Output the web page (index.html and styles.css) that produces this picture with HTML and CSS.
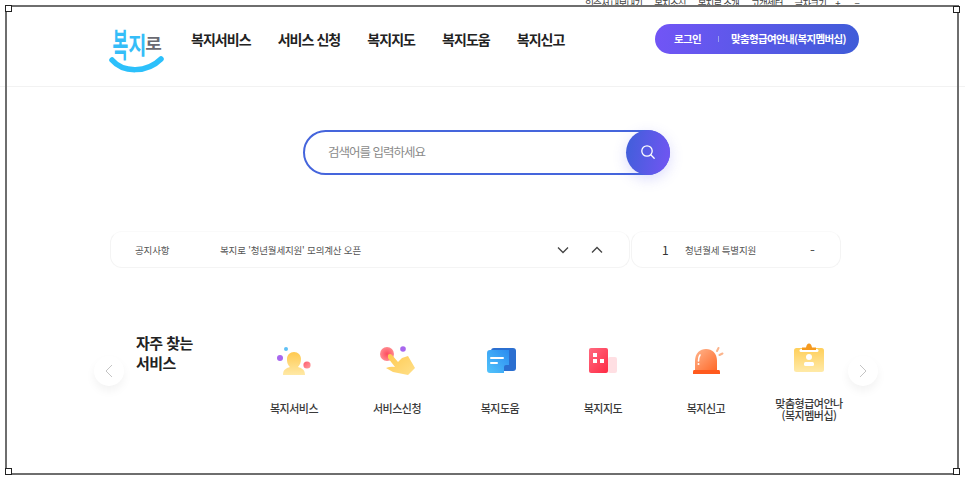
FILE: index.html
```html
<!DOCTYPE html>
<html lang="ko">
<head>
<meta charset="utf-8">
<title>복지로</title>
<link rel="stylesheet" href="styles.css">
</head>
<body>
<div class="page">
  <div class="util">
    <span>인증서 내보내기</span><span>복지소식</span><span>복지로 소개</span><span>고객센터</span><span>글자크기</span><span class="sym">+</span><span class="sym">−</span>
  </div>
  <header class="header">
    <a class="logo">
      <span class="logo-text"><span class="l1">복</span><span class="l2">지</span><span class="l3">로</span></span>
      <svg class="smile" width="58" height="20" viewBox="0 0 58 20"><path d="M3 4 C14 17 38 17 52 3" fill="none" stroke="#2cc0fb" stroke-width="5.5" stroke-linecap="round"/></svg>
    </a>
    <nav class="nav"><a>복지서비스</a><a>서비스 신청</a><a>복지지도</a><a>복지도움</a><a>복지신고</a></nav>
    <div class="pill"><a class="pill-login">로그인</a><i class="pill-sep"></i><a>맞춤형급여안내(복지멤버십)</a></div>
  </header>

  <section class="search">
    <div class="search-box">
      <span class="placeholder">검색어를 입력하세요</span>
      <button class="search-btn" aria-label="검색">
        <svg width="16" height="16" viewBox="0 0 16 16"><circle cx="7" cy="7" r="5.2" fill="none" stroke="#fff" stroke-width="1.3"/><path d="M11 11l3.2 3.2" stroke="#fff" stroke-width="1.3" stroke-linecap="round"/></svg>
      </button>
    </div>
  </section>

  <section class="info">
    <div class="card notice">
      <span class="notice-label">공지사항</span>
      <span class="notice-text">복지로 '청년월세지원' 모의계산 오픈</span>
      <svg class="chev" width="12" height="8" viewBox="0 0 12 8"><path d="M1 1.5l5 5 5-5" fill="none" stroke="#444" stroke-width="1.3"/></svg>
      <svg class="chev chev-up" width="12" height="8" viewBox="0 0 12 8"><path d="M1 6.5l5-5 5 5" fill="none" stroke="#444" stroke-width="1.3"/></svg>
    </div>
    <div class="card rank">
      <span class="rank-num">1</span>
      <span class="rank-text">청년월세 특별지원</span>
      <span class="rank-delta">-</span>
    </div>
  </section>

  <section class="services">
    <h2 class="services-title">자주 찾는<br>서비스</h2>
    <ul class="service-list">
      <li class="service">
        <svg width="40" height="40" viewBox="0 0 40 40">
          <defs>
            <linearGradient id="g1" x1="0" y1="0" x2="0" y2="1"><stop offset="0" stop-color="#ffc94f"/><stop offset="1" stop-color="#ffe9a6"/></linearGradient>
            <linearGradient id="r1" x1="0" y1="0" x2="1" y2="1"><stop offset="0" stop-color="#ff5a6e"/><stop offset="1" stop-color="#ffa0a0"/></linearGradient>
          </defs>
          <circle cx="12" cy="7" r="2" fill="#5fc0f5"/>
          <circle cx="6" cy="16" r="3" fill="#a867ee"/>
          <circle cx="33" cy="23" r="3.6" fill="url(#r1)"/>
          <path d="M9 33 C9 27 13 26 16 25 C13 22 13 19 13 17 C13 13 16 10 20 10 C24 10 27 13 27 17 C27 20 26 23 24 25 C27 26 31 27 31 33 Z" fill="url(#g1)"/>
        </svg>
        <span>복지서비스</span>
      </li>
      <li class="service">
        <svg width="40" height="40" viewBox="0 0 40 40">
          <defs>
            <radialGradient id="r2"><stop offset="0" stop-color="#ff4c5e"/><stop offset="1" stop-color="#ff8a8f"/></radialGradient>
            <linearGradient id="g2" x1="0" y1="0" x2="1" y2="1"><stop offset="0" stop-color="#ffc94f"/><stop offset="1" stop-color="#ffe08a"/></linearGradient>
          </defs>
          <circle cx="10" cy="12" r="7" fill="url(#r2)"/>
          <circle cx="26" cy="7" r="2.8" fill="#a867ee"/>
          <path d="M11 13 Q13 11 15 13 L21 20 L25 16 L31 14 L38 26 L31 33 L16 30 L9 26 Q14 24 18 25 L11 16 Z" fill="url(#g2)"/>
        </svg>
        <span>서비스신청</span>
      </li>
      <li class="service">
        <svg width="40" height="40" viewBox="0 0 40 40">
          <defs><linearGradient id="b3" x1="0" y1="1" x2="1" y2="0"><stop offset="0" stop-color="#52c4fb"/><stop offset="1" stop-color="#2b8cf0"/></linearGradient></defs>
          <path d="M11 9 Q11 6 14 6 H33 Q36 6 36 9 V26 Q36 29 33 29 H22 Z" fill="#2b6fd0"/>
          <path d="M7 11 Q7 8 10 8 H29 V23 H26 Q24 23 24 25 V31 H10 Q7 31 7 28 Z" fill="url(#b3)"/>
          <path d="M11 16 H23" stroke="#fff" stroke-width="2" stroke-linecap="round"/>
          <path d="M11 21 H17" stroke="#fff" stroke-width="2" stroke-linecap="round"/>
        </svg>
        <span>복지도움</span>
      </li>
      <li class="service">
        <svg width="40" height="40" viewBox="0 0 40 40">
          <defs>
            <linearGradient id="r4" x1="0" y1="0" x2="1" y2="1"><stop offset="0" stop-color="#ff6a80"/><stop offset="1" stop-color="#ff2a44"/></linearGradient>
          </defs>
          <rect x="25" y="15" width="9" height="16" rx="2" fill="#ffdfe3"/>
          <rect x="6" y="6" width="19" height="25" rx="2" fill="url(#r4)"/>
          <rect x="10" y="11" width="4" height="4" fill="#fff"/>
          <rect x="10" y="17" width="4" height="4" fill="#fff"/>
          <rect x="17" y="17" width="4" height="4" fill="#fff"/>
        </svg>
        <span>복지지도</span>
      </li>
      <li class="service">
        <svg width="40" height="40" viewBox="0 0 40 40">
          <defs><linearGradient id="o5" x1="0" y1="0" x2="1" y2="1"><stop offset="0" stop-color="#ffb48c"/><stop offset="1" stop-color="#ff6a2a"/></linearGradient></defs>
          <path d="M9 28 V19 C9 11 14 7 20 7 C26 7 31 11 31 19 V28 Z" fill="url(#o5)"/>
          <path d="M8 28 H33 Q34 28 34 30 V32 H7 V30 Q7 28 8 28 Z" fill="#ff5a1e"/>
          <path d="M14 13 Q12.500 15 12.500 19" fill="none" stroke="#fff" stroke-width="1.600" stroke-linecap="round"/>
          <circle cx="12.500" cy="22" r="1" fill="#fff"/>
          <path d="M31 9 L32.500 6" stroke="#fbb48c" stroke-width="2" stroke-linecap="round"/>
          <path d="M33.500 13 L36.500 11.500" stroke="#fbb48c" stroke-width="2" stroke-linecap="round"/>
        </svg>
        <span>복지신고</span>
      </li>
      <li class="service">
        <svg width="40" height="40" viewBox="0 0 40 40">
          <defs><linearGradient id="y6" x1="0" y1="0" x2="0" y2="1"><stop offset="0" stop-color="#ffcf5a"/><stop offset="1" stop-color="#ffeaa8"/></linearGradient></defs>
          <rect x="5" y="6" width="30" height="24" rx="2.500" fill="url(#y6)"/>
          <path d="M12 8.500 H28" stroke="#fff" stroke-width="3" stroke-linecap="round"/>
          <path d="M13 8 V5.500 H17 C17.500 3 18.500 1.500 20 1.500 C21.500 1.500 22.500 3 23 5.500 H27 V8 Z" fill="#f59a1f"/>
          <circle cx="20" cy="15" r="3" fill="#fff"/>
          <rect x="15" y="20" width="10" height="4" rx="1.500" fill="#fff"/>
        </svg>
        <span class="two-line">맞춤형급여안나<br>(복지멤버십)</span>
      </li>
    </ul>
    <button class="arrow arrow-left" aria-label="이전"><svg width="8" height="14" viewBox="0 0 8 14"><path d="M7 1L1 7l6 6" fill="none" stroke="#c4c4c4" stroke-width="1"/></svg></button>
    <button class="arrow arrow-right" aria-label="다음"><svg width="8" height="14" viewBox="0 0 8 14"><path d="M1 1l6 6-6 6" fill="none" stroke="#c4c4c4" stroke-width="1"/></svg></button>
  </section>

  <div class="frame">
    <i class="handle h-tl"></i><i class="handle h-tr"></i><i class="handle h-bl"></i><i class="handle h-br"></i>
  </div>
</div>
</body>
</html>
```
FILE: styles.css
```css
* { box-sizing: border-box; }
html, body { margin: 0; padding: 0; background: #fff; }
body {
  font-family: "Noto Sans CJK KR", "Noto Sans", sans-serif;
  color: #222;
  overflow: hidden;
}
.page { position: relative; width: 965px; height: 480px; overflow: hidden; }

.util {
  height: 5px;
  overflow: hidden;
  display: flex;
  justify-content: flex-end;
  align-items: center;
  gap: 12px;
  padding-right: 100px;
  font-size: 9.500px;
  letter-spacing: -0.85px;
  color: #444;
  line-height: 14px;
}
.util span { flex: none; }
.util .sym { margin-left: -3px; margin-right: 6px; }

.header {
  height: 82px;
  border-bottom: 1px solid #f2f2f2;
  padding: 0 106px 0 110px;
  display: flex;
  align-items: center;
}
.logo { position: relative; display: block; width: 81px; height: 60px; flex: none; margin-top: 6px; }
.logo-text {
  position: absolute;
  left: 2px;
  top: 14px;
  display: flex;
  font-size: 18px;
  font-weight: 700;
  line-height: 22px;
  color: #35bdf8;
  letter-spacing: -1px;
}
.l1 { display: block; transform: scale(0.95, 1.85) translateY(-1px); }
.l2 { display: block; transform: scale(1.1, 1.3); margin-left: 1px; }
.l3 { display: block; color: #6a6a72; transform: translate(1px, -2px) scale(1, 0.85); }
.smile { position: absolute; left: -1px; top: 37px; }
.nav {
  display: flex;
  gap: 27px;
  font-size: 14px;
  font-weight: 700;
  letter-spacing: -0.95px;
  color: #222;
  white-space: nowrap;
  margin-bottom: 13px;
}
.pill {
  margin-left: auto;
  margin-bottom: 14px;
  width: 204px;
  height: 30px;
  border-radius: 15px;
  background: linear-gradient(100deg, #7255f6, #3f5cd8);
  color: #fff;
  font-size: 10.500px;
  font-weight: 700;
  letter-spacing: -0.65px;
  display: flex;
  align-items: center;
  padding-left: 19px;
  white-space: nowrap;
}
.pill-sep { width: 1px; height: 6px; background: #9aa0ee; margin: 0 12px 0 17px; }

.search { display: flex; padding: 43px 0 0 303px; }
.search-box {
  position: relative;
  width: 367px;
  height: 45px;
  display: flex;
  align-items: center;
  padding-left: 23px;
  border: 2px solid #4565dc;
  border-radius: 23px;
  background: #fff;
}
.placeholder { font-size: 12.500px; color: #8a8a8a; letter-spacing: -1px; margin-top: -2px; }
.search-btn {
  position: absolute;
  right: -2px;
  top: -2px;
  width: 44px;
  height: 45px;
  padding: 0 1px 2px 0;
  border: 0;
  border-radius: 50%;
  background: linear-gradient(100deg, #3f5fd9, #7355f3);
  box-shadow: 0 4px 14px rgba(90, 90, 240, 0.22);
  display: flex;
  align-items: center;
  justify-content: center;
}

.info { display: flex; gap: 1px; padding: 56px 0 0 110px; }
.card {
  height: 37px;
  border: 1px solid #f4f4f4;
  border-top-color: #fafafa;
  border-radius: 12px;
  display: flex;
  align-items: center;
  font-size: 9.500px;
  color: #555;
  letter-spacing: -0.17px;
  white-space: nowrap;
}
.notice { width: 520px; padding-left: 24px; }
.notice-label { width: 85px; flex: none; }
.notice .chev { margin-left: 196px; }
.notice .chev-up { margin-left: 22px; }
.rank { width: 210px; padding-left: 30px; }
.rank-num { font-size: 12px; color: #333; width: 23px; flex: none; }
.rank-delta { margin-left: 54px; font-size: 14px; line-height: 14px; }

.services { position: relative; display: flex; padding: 63px 0 0 136px; }
.services-title {
  width: 106.500px;
  flex: none;
  margin: 2px 0 0;
  font-size: 15px;
  line-height: 20px;
  font-weight: 700;
  letter-spacing: -0.55px;
  color: #222;
}
.service-list { display: flex; margin: 0; padding: 0; list-style: none; }
.service {
  width: 103px;
  height: 92px;
  display: flex;
  flex-direction: column;
  align-items: center;
  padding-top: 11px;
  font-size: 11px;
  font-weight: 500;
  letter-spacing: -0.5px;
  line-height: 11px;
  color: #3a3a3a;
  text-align: center;
}
.service svg { flex: none; }
.service span { margin-top: 21px; }
.service .two-line { margin-top: 16px; line-height: 11.500px; }
.arrow {
  position: absolute;
  top: 88px;
  width: 30px;
  height: 30px;
  padding: 0;
  border: 0;
  border-radius: 50%;
  background: #fff;
  box-shadow: 0 5px 10px rgba(0, 0, 0, 0.05);
  display: flex;
  align-items: center;
  justify-content: center;
}
.arrow-left { left: 94px; }
.arrow-right { left: 848px; }

.frame {
  position: absolute;
  left: 5px;
  top: 5px;
  width: 954px;
  height: 469.500px;
  border: 2px solid #6e6e6e;
  pointer-events: none;
}
.handle {
  position: absolute;
  width: 7px;
  height: 7px;
  background: #fff;
  border: 1px solid #222;
}
.h-tl { left: -2px; top: -2px; }
.h-tr { right: -3px; top: -1px; }
.h-bl { left: -2px; bottom: -2px; }
.h-br { right: -3px; bottom: -2px; }
```
